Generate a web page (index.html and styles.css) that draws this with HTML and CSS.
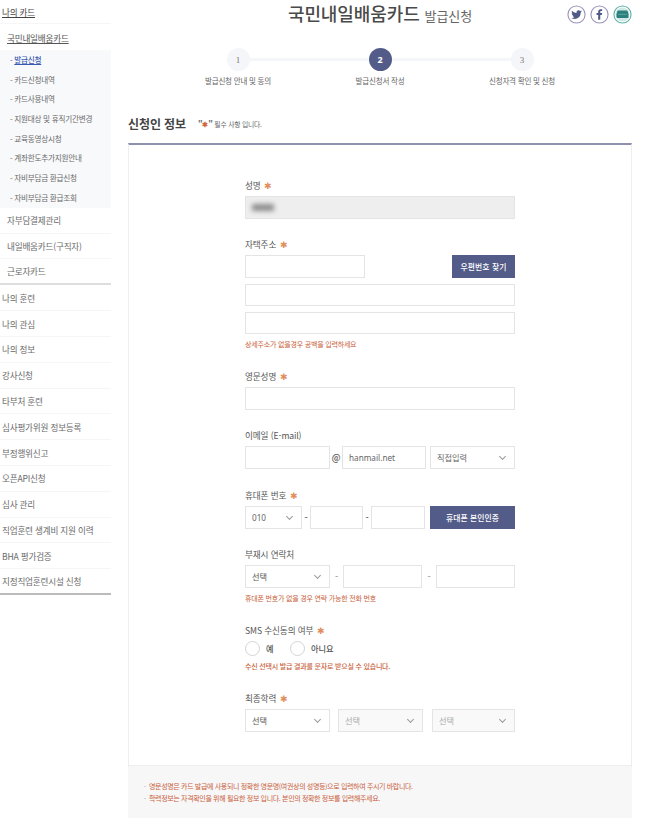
FILE: index.html
```html
<!DOCTYPE html>
<html lang="ko">
<head>
<meta charset="utf-8">
<title>국민내일배움카드 발급신청</title>
<link rel="stylesheet" href="styles.css">
</head>
<body>
<div class="page">
  <aside class="side">
    <a class="top open">나의 카드</a>
    <a class="second open">국민내일배움카드</a>
    <ul class="sub">
      <li class="on">- <span>발급신청</span></li>
      <li>- 카드신청내역</li>
      <li>- 카드사용내역</li>
      <li>- 지원대상 및 휴직기간변경</li>
      <li>- 교육동영상시청</li>
      <li>- 계좌한도추가지원안내</li>
      <li>- 자비부담금 환급신청</li>
      <li>- 자비부담금 환급조회</li>
    </ul>
    <a class="second">자부담결제관리</a>
    <a class="second">내일배움카드(구직자)</a>
    <a class="second last">근로자카드</a>
    <a class="top">나의 훈련</a>
    <a class="top">나의 관심</a>
    <a class="top">나의 정보</a>
    <a class="top">강사신청</a>
    <a class="top">타부처 훈련</a>
    <a class="top">심사평가위원 정보등록</a>
    <a class="top">부정행위신고</a>
    <a class="top">오픈API신청</a>
    <a class="top">심사 관리</a>
    <a class="top">직업훈련 생계비 지원 이력</a>
    <a class="top">BHA 평가검증</a>
    <a class="top final">지정직업훈련시설 신청</a>
  </aside>
  <main class="main">
    <header class="head">
      <span></span>
      <h1>국민내일배움카드 <small>발급신청</small></h1>
      <div class="share">
        <svg class="ico" viewBox="0 0 20 20"><circle cx="10" cy="10" r="9" fill="#fff" stroke="#9a97bd" stroke-width="1.2"/><path fill="#4f5b86" d="M15.6 6.600c-.4.200-.8.300-1.300.4.500-.3.800-.7 1-1.200-.4.300-.9.400-1.400.5a2.300 2.300 0 0 0-3.900 2.100C8.100 8.300 6.500 7.400 5.300 6c-.6 1.100-.3 2.400.7 3.100-.4 0-.7-.1-1-.3 0 1.100.8 2.100 1.800 2.300-.3.100-.7.100-1 0 .3.900 1.200 1.600 2.200 1.600-1 .8-2.200 1.100-3.400 1 3.400 2.100 9.800 1 9.800-5.700.5-.3.900-.8 1.200-1.400z"/></svg>
        <svg class="ico" viewBox="0 0 20 20"><circle cx="10" cy="10" r="9" fill="#fff" stroke="#9a97bd" stroke-width="1.2"/><path fill="#4f5b86" d="M10.800 15.500v-5h1.700l.3-2h-2V7.200c0-.6.200-.9.900-.9h1.100V4.500c-.3 0-.9-.1-1.600-.1-1.600 0-2.600 1-2.600 2.600v1.500H6.900v2h1.700v5z"/></svg>
        <svg class="ico" viewBox="0 0 20 20"><circle cx="10" cy="10" r="9" fill="#fff" stroke="#5fb3a8" stroke-width="1.200"/><circle cx="10" cy="10" r="7.400" fill="#cfe8e4"/><path fill="#2b7f7c" d="M5.800 5.800h8.400c.8 0 1.200.5 1.400 1.200l.7 2.800v2.900c0 .7-.4 1.100-1.100 1.100H4.800c-.7 0-1.100-.4-1.100-1.100V9.800l.7-2.800c.2-.7.600-1.200 1.400-1.200z"/><rect x="5.500" y="9.300" width="9" height="1" fill="#5fa8a3"/></svg>
      </div>
    </header>

    <ol class="steps">
      <li class="step"><b class="dot">1</b><span>발급신청 안내 및 동의</span></li>
      <li class="step now"><b class="dot">2</b><span>발급신청서 작성</span></li>
      <li class="step"><b class="dot">3</b><span>신청자격 확인 및 신청</span></li>
    </ol>

    <div class="title">
      <h2>신청인 정보</h2>
      <p><span class="quote">"<i>✱</i>"</span> 필수 사항 입니다.</p>
    </div>

    <form class="panel">
      <div class="col">
        <section class="field f-name">
          <label>성명 <i>✱</i></label>
          <div class="box disabled"><span class="blur"></span></div>
        </section>

        <section class="field f-addr">
          <label>자택주소 <i>✱</i></label>
          <div class="row between">
            <div class="box w120"></div>
            <button type="button" class="btn w63">우편번호 찾기</button>
          </div>
          <div class="box stack"></div>
          <div class="box stack"></div>
          <p class="hint">상세주소가 없을경우 공백을 입력하세요</p>
        </section>

        <section class="field f-eng">
          <label>영문성명 <i>✱</i></label>
          <div class="box"></div>
        </section>

        <section class="field f-mail">
          <label>이메일 (E-mail)</label>
          <div class="row">
            <div class="box w85"></div>
            <span class="sep w12">@</span>
            <div class="box w84 val">hanmail.net</div>
            <div class="box sel w85 ml4">직접입력</div>
          </div>
        </section>

        <section class="field f-phone">
          <label>휴대폰 번호 <i>✱</i></label>
          <div class="row">
            <div class="box sel w57 num">010</div>
            <span class="sep w8">-</span>
            <div class="box w53"></div>
            <span class="sep w8">-</span>
            <div class="box w54"></div>
            <button type="button" class="btn w85 ml5">휴대폰 본인인증</button>
          </div>
        </section>

        <section class="field f-alt">
          <label>부재시 연락처</label>
          <div class="row">
            <div class="box sel w85 dark">선택</div>
            <span class="sep w13 light">-</span>
            <div class="box w79"></div>
            <span class="sep w14 light">-</span>
            <div class="box w79"></div>
          </div>
          <p class="hint">휴대폰 번호가 없을 경우 연락 가능한 전화 번호</p>
        </section>

        <section class="field f-sms">
          <label>SMS 수신동의 여부 <i>✱</i></label>
          <div class="radios">
            <span class="radio"><b></b>예</span>
            <span class="radio"><b></b>아니요</span>
          </div>
          <p class="hint">수신 선택시 발급 결과를 문자로 받으실 수 있습니다.</p>
        </section>

        <section class="field f-edu">
          <label>최종학력 <i>✱</i></label>
          <div class="row">
            <div class="box sel w85 dark">선택</div>
            <div class="box sel w85 ml8 off">선택</div>
            <div class="box sel w83 ml9 off">선택</div>
          </div>
        </section>
      </div>
    </form>

    <div class="notes">
      <p>영문성명은 카드 발급에 사용되니 정확한 영문명(여권상의 성명등)으로 입력하여 주시기 바랍니다.</p>
      <p>학력정보는 자격확인을 위해 필요한 정보 입니다. 본인의 정확한 정보를 입력해주세요.</p>
    </div>
  </main>
</div>
</body>
</html>
```

FILE: styles.css
```css
* { box-sizing: border-box; }
html, body { margin: 0; padding: 0; background: #fff; }
body {
  font-family: "Noto Sans CJK KR", "Noto Sans", sans-serif;
  color: #555;
  font-size: 9px;
  overflow: hidden;
  height: 825px;
}
h1, h2, p, ul, ol { margin: 0; padding: 0; list-style: none; }
.page { display: flex; align-items: flex-start; }

/* sidebar */
.side { width: 111px; flex: none; display: flex; flex-direction: column; }
.side a { display: flex; align-items: center; border-bottom: 1px solid #f6f6f6; color: #6a6a6a; font-size: 8.600px; letter-spacing: -.2px; white-space: nowrap; }
.top { height: 25.800px; padding-left: 2px; }
.side .top.open { height: 24px; color: #444; text-decoration: underline; }
.second { height: 25.700px; padding-left: 7px; }
.side .second.open { height: 26px; padding-top: 2px; color: #555; text-decoration: underline; border-bottom: 0; }
.side .second.last { border-bottom: 2px solid #ddd; height: 26px; }
.side .top.final { border-bottom: 2px solid #bbb; height: 26px; }
.sub { background: #f8f9fb; padding: 0 0 0 10px; height: 158px; }
.sub li { height: 19.700px; line-height: 19.700px; font-size: 7.600px; color: #6a6a6a; letter-spacing: -.25px; white-space: nowrap; }
.sub li.on { color: #3b5bb0; }
.sub li.on span { text-decoration: underline; font-weight: 500; }

/* main */
.main { width: 504px; margin-left: 17px; flex: none; }
.head { display: grid; grid-template-columns: 1fr auto 1fr; align-items: center; height: 26px; }
.head h1 { font-size: 18px; font-weight: 500; line-height: 26px; color: #4a4a4a; letter-spacing: -.1px; white-space: nowrap; }
.head small { font-size: 13px; font-weight: 400; color: #666; }
.share { display: flex; justify-content: flex-end; gap: 4px; }
.ico { width: 19px; height: 19px; display: block; }

.steps { display: grid; grid-template-columns: repeat(3, 142px); margin: 22px 0 0 39px; }
.step { position: relative; display: flex; flex-direction: column; align-items: center; }
.step span { margin-top: 4px; font-size: 7.500px; line-height: 12px; color: #666; letter-spacing: -.2px; white-space: nowrap; }
.dot { position: relative; z-index: 1; width: 23px; height: 23px; border-radius: 50%; background: #f5f6f9; color: #777; font-family: "Liberation Serif", serif; font-weight: 400; font-size: 9px; display: flex; align-items: center; justify-content: center; }
.step::after { content: ""; position: absolute; top: 10px; left: 50%; width: 100%; height: 3px; background: #f5f6f9; }
.step:last-child::after { display: none; }
.now .dot { background: #535c88; color: #fff; font-family: "Noto Sans", sans-serif; font-weight: 700; }

.title { display: flex; align-items: center; height: 20px; margin-top: 26px; }
.title h2 { font-size: 12px; font-weight: 700; color: #444; letter-spacing: -.1px; }
.title p { margin-left: 12px; font-size: 6.800px; color: #666; letter-spacing: -.2px; white-space: nowrap; }
.title .quote { font-size: 8px; font-weight: 700; }
.title i { color: #d2683a; font-style: normal; font-size: 7px; }

.panel { margin-top: 10px; height: 623px; border: 1px solid #eeeeee; border-top: 2px solid #8f8fae; padding-left: 116px; }
.col { width: 270px; padding-top: 34px; }
.field label { display: block; height: 13px; line-height: 13px; font-size: 8.600px; color: #555; letter-spacing: -.1px; margin-bottom: 4px; white-space: nowrap; }
.field label i { font-style: normal; color: #e08f5c; font-size: 9px; margin-left: 1px; }
.f-addr { margin-top: 19px; }
.f-eng { margin-top: 20px; }
.f-mail { margin-top: 19px; }
.f-phone { margin-top: 20px; }
.f-alt { margin-top: 19px; }
.f-sms { margin-top: 20px; }
.f-edu { margin-top: 20px; }

.row { display: flex; align-items: center; }
.between { justify-content: space-between; }
.box { height: 23px; width: 100%; flex: none; background: #fff; border: 1px solid #e4e4e4; font-size: 8.200px; line-height: 21px; padding-left: 6px; color: #666; position: relative; }
.stack { margin-top: 6px; height: 22px; }
.disabled { background: #eeeeee; display: flex; align-items: center; }
.blur { width: 22px; height: 7px; background: #8c8c8c; filter: blur(2.500px); }
.w120 { width: 120px; } .w85 { width: 85px; } .w84 { width: 84px; } .w83 { width: 83px; }
.w57 { width: 57px; } .w53 { width: 53px; } .w54 { width: 54px; } .w79 { width: 79px; }
.ml4 { margin-left: 4px; } .ml5 { margin-left: 5px; } .ml8 { margin-left: 8px; } .ml9 { margin-left: 9px; }
.val { color: #666; font-family: "Noto Sans", sans-serif; }
.num { font-family: "Noto Sans", sans-serif; }
.dark { color: #555; }
.off { color: #aaa; background: #f9f9f9; }
.sel::after { content: ""; position: absolute; right: 9px; top: 7px; width: 4px; height: 4px; border-right: 1px solid #999; border-bottom: 1px solid #999; transform: rotate(45deg); }
.sep { flex: none; text-align: center; font-size: 9px; color: #555; font-weight: 500; }
.sep.light { color: #999; }
.w12 { width: 12px; } .w8 { width: 8px; } .w13 { width: 13px; } .w14 { width: 14px; }
.btn { height: 23px; border: 0; background: #535c88; color: #fff; font: 500 7.800px "Noto Sans CJK KR", sans-serif; letter-spacing: .1px; padding: 0; flex: none; }
.w63 { width: 63px; }
.hint { margin-top: 5px; height: 11px; line-height: 11px; font-size: 7px; color: #c9603a; letter-spacing: -.2px; white-space: nowrap; }

.radios { display: flex; gap: 16.500px; height: 16px; align-items: center; margin-top: -1px; }
.radio { display: flex; align-items: center; gap: 6px; font-size: 8.200px; font-weight: 500; color: #555; }
.radio b { width: 15px; height: 15px; border-radius: 50%; border: 1.500px solid #d4d4d4; background: #fff; }
.f-sms .hint { font-weight: 500; }

.notes { background: #f7f7f8; height: 52px; padding: 15px 0 0 21px; }
.notes p { position: relative; font-size: 7px; line-height: 11.700px; color: #c9603a; letter-spacing: -.35px; white-space: nowrap; }
.notes p::before { content: "·"; position: absolute; left: -5px; color: #999; }
```
